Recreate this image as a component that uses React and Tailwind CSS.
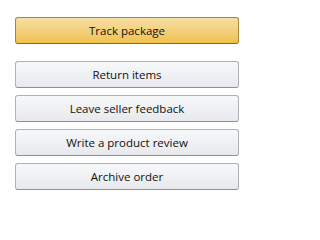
const actions = ["Return items", "Leave seller feedback", "Write a product review", "Archive order"];

export default function App() {
  return (
    <div className="w-[252px] h-[200px] bg-white pt-[17px] pl-[15px] font-['Open_Sans',sans-serif]">
      <div className="flex w-[224px] flex-col">
        <button className="h-[27px] rounded-[3px] border border-[#a88734] border-b-[#846a29] bg-gradient-to-b from-[#f7dfa5] to-[#f0c14b] text-[11.5px] text-[#111]">
          Track package
        </button>
        <div className="mt-[17px] flex flex-col gap-[7px]">
          {actions.map((label) => (
            <button
              key={label}
              className="h-[27px] rounded-[3px] border border-[#adb1b8] border-b-[#8d9096] bg-gradient-to-b from-[#f7f8fa] to-[#e7e9ec] text-[11.5px] text-[#111]"
            >
              {label}
            </button>
          ))}
        </div>
      </div>
    </div>
  );
}
